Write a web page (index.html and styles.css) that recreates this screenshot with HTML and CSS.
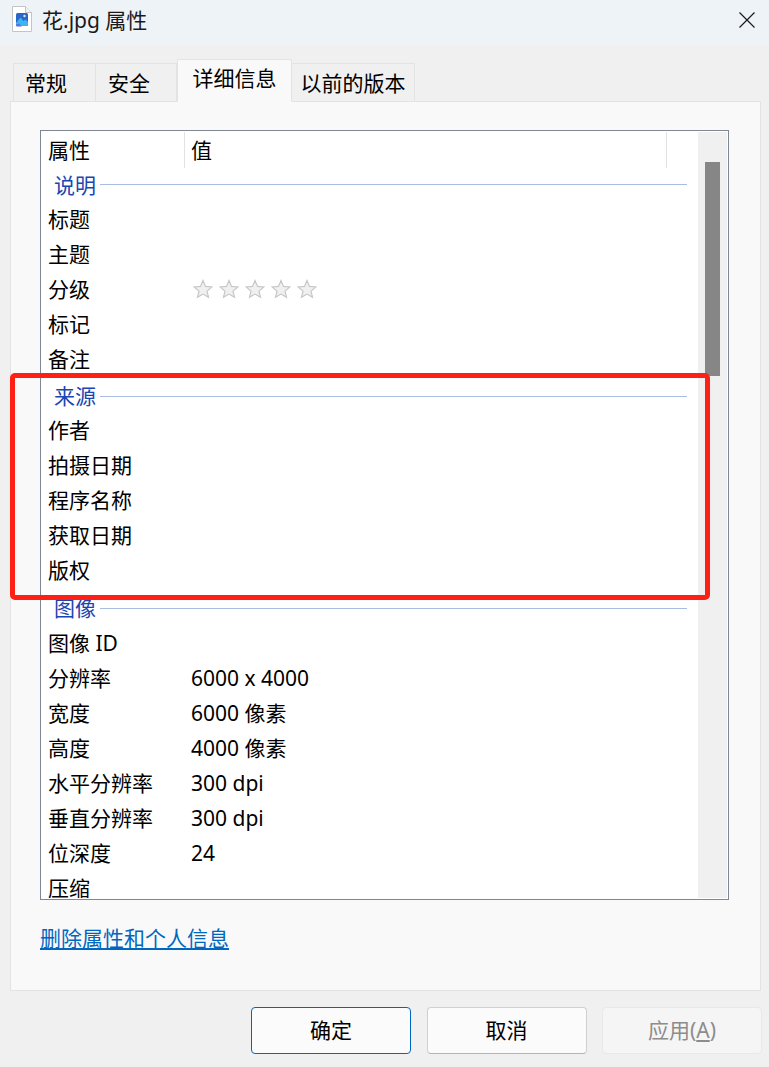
FILE: index.html
```html
<!DOCTYPE html>
<html lang="zh-CN">
<head>
<meta charset="utf-8">
<title>花.jpg 属性</title>
<link rel="stylesheet" href="styles.css">
</head>
<body>
<div class="window">
  <header class="titlebar">
    <svg class="file-icon" viewBox="0 0 20 26" width="20" height="26" aria-hidden="true">
      <path d="M.5.5h13l6 6v19H.5z" fill="#fff" stroke="#c4c4c4"/>
      <path d="M13.5.5v6h6" fill="#f2f2f2" stroke="#c4c4c4"/>
      <rect x="4" y="7" width="12" height="13" rx="1.500" fill="#2a66c8"/>
      <path d="M4 17l4.500-5.500 3 3.500 2-1.500 2.500 2.500v2.500a1.500 1.500 0 0 1-1.500 1.500h-9A1.500 1.500 0 0 1 4 18.500z" fill="#3fb4f2"/>
      <path d="M4 18.500l3-1 3 3H5.500A1.500 1.500 0 0 1 4 18.500z" fill="#5a6fe0"/>
      <circle cx="12.500" cy="10" r="1.200" fill="#cfe6fb"/>
    </svg>
    <span class="title">花.jpg 属性</span>
    <svg class="close" viewBox="0 0 16 16" width="16" height="16" aria-hidden="true">
      <path d="M.5.500l15 15M15.500.500l-15 15" fill="none" stroke="#1a1a1a" stroke-width="1.200"/>
    </svg>
  </header>

  <nav class="tabs">
    <div class="tab tab-a">常规</div>
    <div class="tab tab-b">安全</div>
    <div class="tab tab-c active">详细信息</div>
    <div class="tab tab-d">以前的版本</div>
  </nav>

  <main class="panel">
    <section class="list">
      <div class="rows">
        <div class="head">
          <div class="head-name">属性</div>
          <div class="head-value">值</div>
        </div>
        <div class="group"><span>说明</span><i></i></div>
        <div class="row"><span class="k">标题</span></div>
        <div class="row"><span class="k">主题</span></div>
        <div class="row">
          <span class="k">分级</span>
          <span class="stars">
            <svg viewBox="0 0 20 20" width="20" height="20"><path class="star" d="M10 1.500l2.500 5.900 6.400.5-4.900 4.200 1.500 6.200L10 15.100l-5.500 3.200 1.500-6.200-4.900-4.200 6.400-.5z"/></svg>
            <svg viewBox="0 0 20 20" width="20" height="20"><path class="star" d="M10 1.500l2.500 5.900 6.400.5-4.900 4.200 1.500 6.200L10 15.100l-5.500 3.200 1.500-6.200-4.900-4.200 6.400-.5z"/></svg>
            <svg viewBox="0 0 20 20" width="20" height="20"><path class="star" d="M10 1.500l2.500 5.900 6.400.5-4.900 4.200 1.500 6.200L10 15.100l-5.500 3.200 1.500-6.200-4.900-4.200 6.400-.5z"/></svg>
            <svg viewBox="0 0 20 20" width="20" height="20"><path class="star" d="M10 1.500l2.500 5.900 6.400.5-4.900 4.200 1.500 6.200L10 15.100l-5.500 3.200 1.500-6.200-4.900-4.200 6.400-.5z"/></svg>
            <svg viewBox="0 0 20 20" width="20" height="20"><path class="star" d="M10 1.500l2.500 5.900 6.400.5-4.900 4.200 1.500 6.200L10 15.100l-5.500 3.200 1.500-6.200-4.900-4.200 6.400-.5z"/></svg>
          </span>
        </div>
        <div class="row"><span class="k">标记</span></div>
        <div class="row"><span class="k">备注</span></div>
        <div class="group"><span>来源</span><i></i></div>
        <div class="row"><span class="k">作者</span></div>
        <div class="row"><span class="k">拍摄日期</span></div>
        <div class="row"><span class="k">程序名称</span></div>
        <div class="row"><span class="k">获取日期</span></div>
        <div class="row"><span class="k">版权</span></div>
        <div class="group last"><span>图像</span><i></i></div>
        <div class="row"><span class="k">图像 ID</span></div>
        <div class="row"><span class="k">分辨率</span><span>6000 x 4000</span></div>
        <div class="row"><span class="k">宽度</span><span>6000 像素</span></div>
        <div class="row"><span class="k">高度</span><span>4000 像素</span></div>
        <div class="row"><span class="k">水平分辨率</span><span>300 dpi</span></div>
        <div class="row"><span class="k">垂直分辨率</span><span>300 dpi</span></div>
        <div class="row"><span class="k">位深度</span><span>24</span></div>
        <div class="row"><span class="k">压缩</span></div>
      </div>
      <div class="scrollbar"><div class="thumb"></div></div>
    </section>
    <a class="link" href="#">删除属性和个人信息</a>
  </main>

  <footer class="actions">
    <button class="btn primary">确定</button>
    <button class="btn">取消</button>
    <button class="btn disabled">应用(<u>A</u>)</button>
  </footer>
</div>
<div class="highlight"></div>
</body>
</html>
```
FILE: styles.css
```css
* { box-sizing: border-box; }
html, body { margin: 0; height: 100%; }
body {
  position: relative;
  overflow: hidden;
  background: #f0f0f0;
  color: #000;
  font: 21px/30px "Noto Sans", "Noto Sans CJK SC", sans-serif;
}
.window { display: flex; flex-direction: column; height: 100%; }

.titlebar {
  display: flex;
  align-items: center;
  height: 45px;
  flex: none;
  padding: 0 14px 0 12px;
  background: #eef3f8;
}
.file-icon { flex: none; margin-top: -7px; }
.title { margin-left: 10px; margin-top: -5px; color: #1a1a1a; }
.close { margin-left: auto; margin-top: -5px; }

.tabs {
  display: flex;
  align-items: flex-end;
  height: 56px;
  flex: none;
  padding-left: 13px;
  position: relative;
  z-index: 1;
}
.tab {
  height: 39px;
  margin-bottom: -1px;
  padding-top: 4px;
  background: #f0f0f0;
  border: 1px solid #e3e3e3;
  border-left-width: 0;
  text-align: center;
}
.tab-a { width: 83px; padding-left: 11px; border-left-width: 1px; text-align: left; }
.tab-b { width: 81px; padding-left: 12px; text-align: left; }
.tab-c { width: 115px; }
.tab-d { width: 123px; }
.tab.active {
  height: 43px;
  padding-top: 3px;
  background: #f9f9f9;
  border-left-width: 1px;
  border-bottom-color: #f9f9f9;
  border-radius: 2px 2px 0 0;
}

.panel {
  flex: 1;
  margin: 0 8px 0 10px;
  padding: 28px 31px 0 29px;
  background: #f9f9f9;
  border: 1px solid #e3e3e3;
}
.list {
  display: flex;
  height: 770px;
  padding: 1px;
  background: #fff;
  border: 1px solid #7f8694;
}
.rows { flex: 1; min-width: 0; overflow: hidden; }
.head { display: flex; height: 36px; margin-bottom: -2.900px; }
.head-name { width: 143px; padding: 3px 0 0 6px; border-right: 1px solid #e2e2e2; }
.head-value { width: 482px; padding: 3px 0 0 6px; border-right: 1px solid #e2e2e2; }
.row, .group { display: flex; align-items: center; white-space: nowrap; }
.row { height: 35px; padding-left: 6px; }
.k { width: 143px; flex: none; }
.group { height: 36.400px; padding: 3px 11px 0 12px; color: #1b45b0; }
.group.last { height: 37.500px; }
.group i { flex: 1; height: 1px; margin-left: 4px; background: #a9bce4; }
.stars { display: flex; gap: 6px; margin-left: 2px; }
.star { fill: #f0f0f0; stroke: #c6c6c6; stroke-width: 1.200; }

.scrollbar { width: 29px; flex: none; padding: 30px 0 0 7px; background: #f0f0f0; }
.thumb { width: 15px; height: 214px; background: #868686; }

.link {
  display: inline-block;
  margin-top: 23px;
  color: #0067c0;
  text-decoration: underline;
}

.actions {
  display: flex;
  justify-content: flex-end;
  gap: 15.500px;
  flex: none;
  height: 76px;
  padding: 16px 7px 0 0;
}
.btn {
  width: 160px;
  height: 47px;
  padding: 0 0 1px;
  font: inherit;
  color: #000;
  background: #fbfbfb;
  border: 1px solid #d0d0d0;
  border-bottom-color: #b5b5b5;
  border-radius: 4px;
}
.btn.primary { border: 1px solid #0067c0; }
.btn.disabled { color: #8c8c8c; background: #f5f5f5; border-color: #e8e8e8; }

.highlight {
  position: absolute;
  left: 10px;
  top: 373px;
  width: 700px;
  height: 227px;
  border: 5px solid #ff2015;
  border-radius: 5px;
  pointer-events: none;
}
```
